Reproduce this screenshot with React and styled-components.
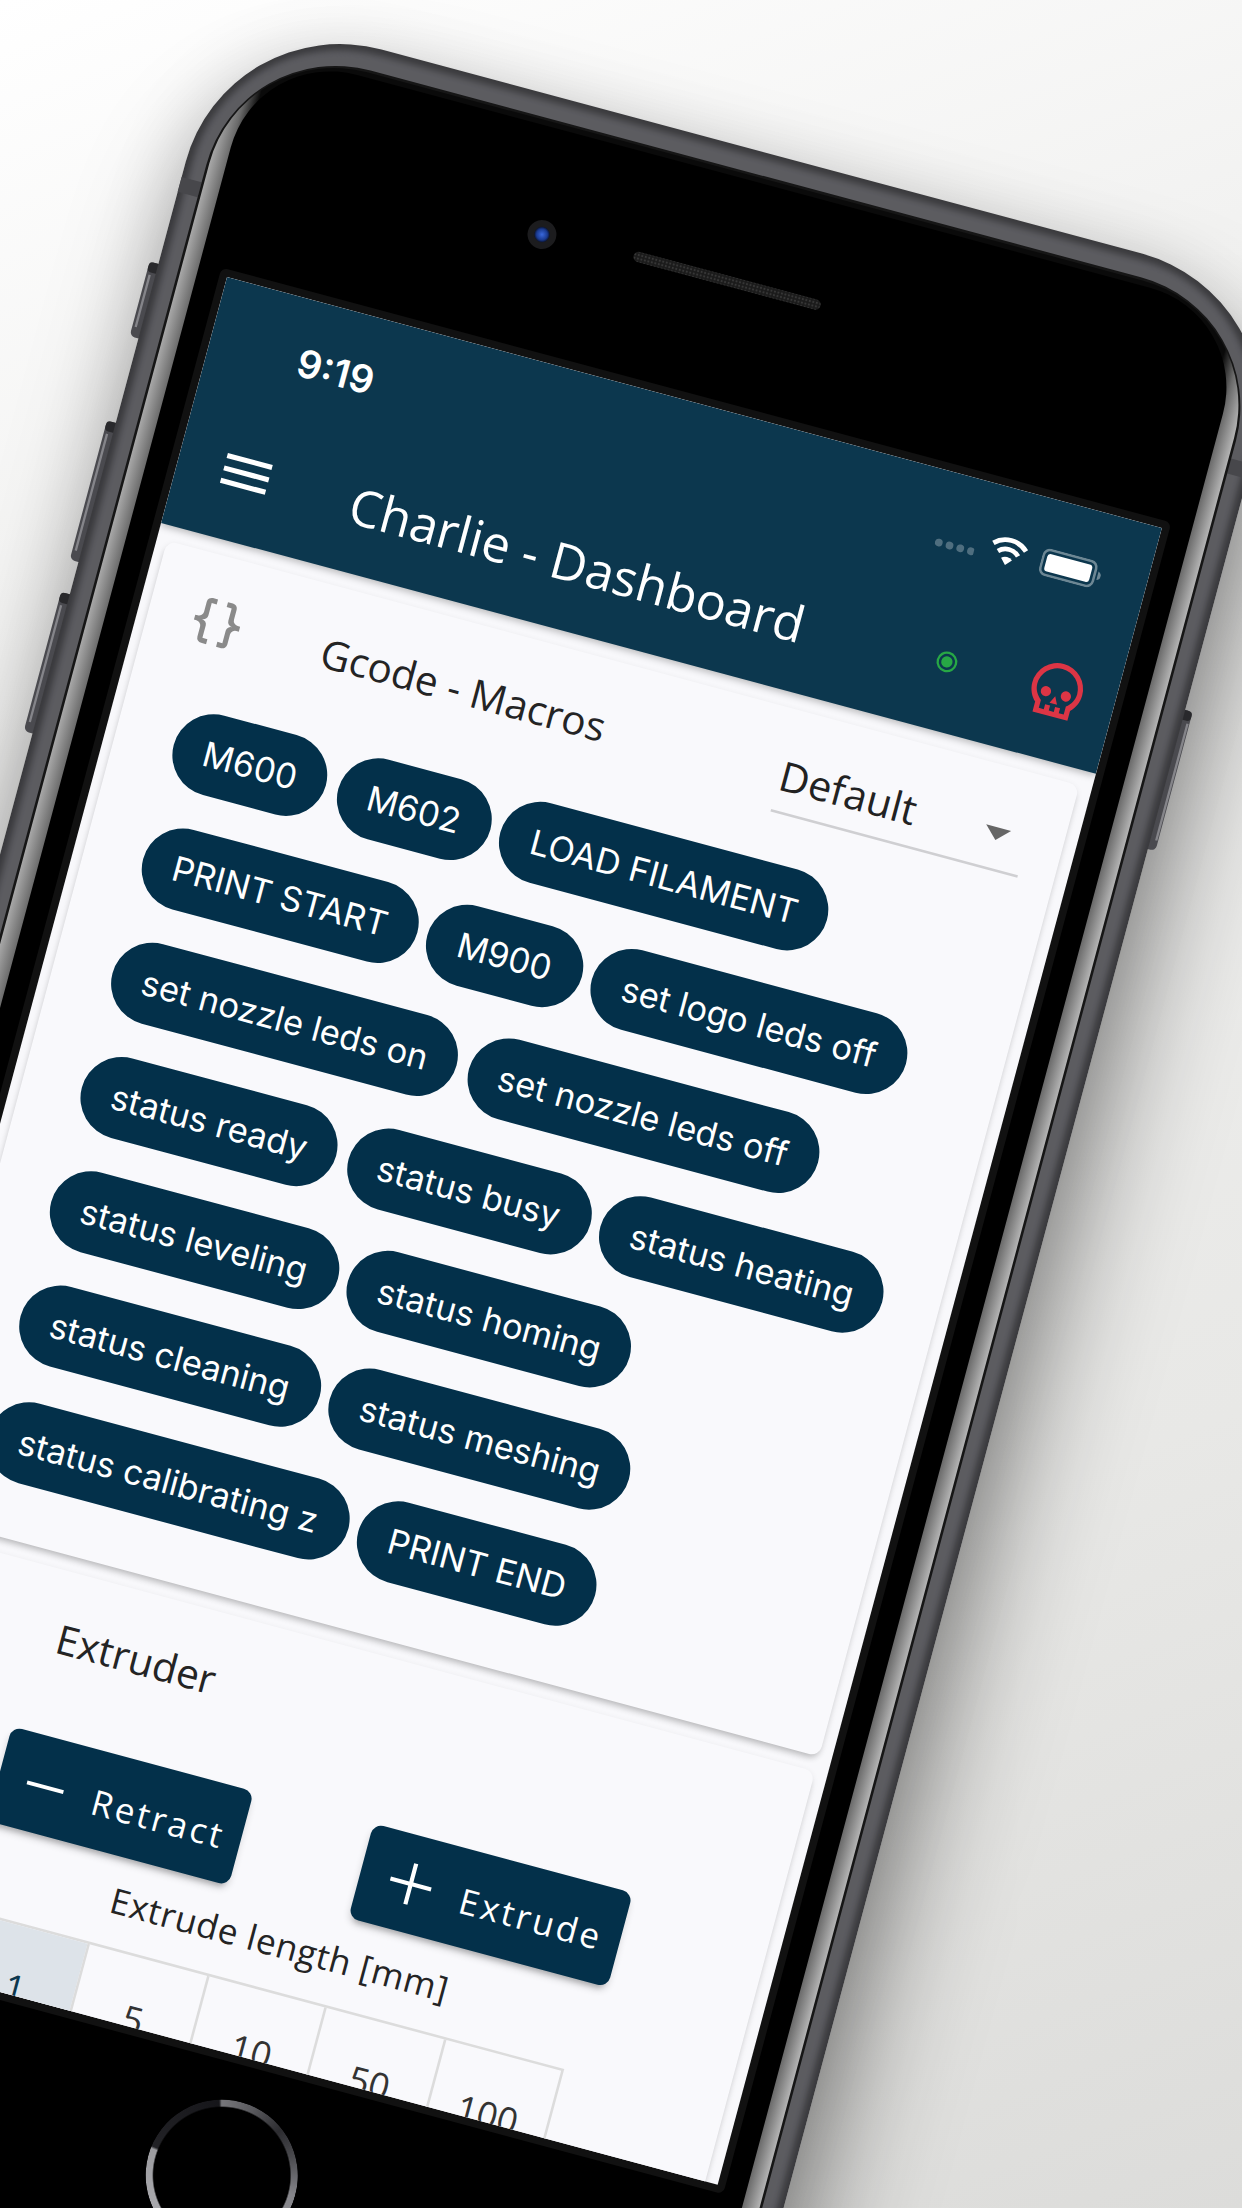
import React from 'react'
import styled, { createGlobalStyle } from 'styled-components'

const GlobalStyle = createGlobalStyle`
  html, body { margin: 0; padding: 0; background: #f1f1f0; }
  * { box-sizing: border-box; }
`

const Stage = styled.div`
  position: relative;
  width: 1242px;
  height: 2208px;
  overflow: hidden;
  background: linear-gradient(160deg, #ffffff 0%, #f2f2f1 25%, #e8e8e6 70%, #dcdcda 100%);
  font-family: "Open Sans", "Noto Sans", sans-serif;
`

/* the whole phone is one tilted sheet, drawn in 375x667 screen units */
const Device = styled.div`
  position: absolute;
  left: 0;
  top: 0;
  width: 375px;
  height: 667px;
  transform-origin: 0 0;
  transform: matrix(2.493, 0.669, -0.666, 2.484, 227, 277);
`

const DeviceShadow = styled.div`
  position: absolute;
  left: -27px;
  top: -100px;
  width: 429px;
  height: 867px;
  border-radius: 62px;
  box-shadow: 10px 24px 44px rgba(0, 0, 0, 0.42), -2px 4px 26px rgba(0, 0, 0, 0.14);
`

const Shell = styled.svg`
  position: absolute;
  left: 0;
  top: 0;
  width: 375px;
  height: 667px;
  overflow: visible;
`

const HomeRing = styled.div`
  position: absolute;
  left: 158.5px;
  top: 683.5px;
  width: 59px;
  height: 59px;
  border-radius: 50%;
  background: conic-gradient(from -15deg, #77777b 0deg, #5a5a5e 25deg, #2c2c30 52deg, #4a4a4e 75deg, #85858a 105deg,
    #a0a0a4 180deg, #a8a8ac 250deg, #9c9ca0 291deg, #222226 293deg, #16161a 358deg, #77777b 360deg);
  mask: radial-gradient(circle, transparent 26.4px, #000 27px);
`

const Screen = styled.div`
  position: absolute;
  left: 0;
  top: 0;
  width: 375px;
  height: 667px;
  overflow: hidden;
  display: flex;
  flex-direction: column;
  background: #f8f8fb;
  color: #222;
`

const AppBar = styled.header`
  flex: none;
  height: 99px;
  background: #0c374e;
  color: #fff;
  box-shadow: 0 1px 3px rgba(0, 0, 0, 0.25);
  position: relative;
  z-index: 1;
`

const StatusBar = styled.div`
  height: 48px;
  padding: 0 18px 0 35px;
  display: flex;
  align-items: center;
`

const Time = styled.span`
  font-family: Inter, "Liberation Sans", sans-serif;
  font-size: 15px;
  font-weight: 600;
  flex: 1;
`

const SignalDots = styled.svg`
  width: 16px;
  height: 4px;
  margin-top: 7px;
`

const Wifi = styled.svg`
  width: 16px;
  height: 12px;
  margin: 0 5px 0 5px;
`

const Battery = styled.svg`
  width: 24px;
  height: 11px;
`

const Toolbar = styled.div`
  height: 48px;
  padding: 0 11px 0 15px;
  display: flex;
  align-items: center;
`

const Icon = styled.svg`
  flex: none;
  width: ${p => p.$size || 24}px;
  height: ${p => p.$size || 24}px;
  fill: ${p => p.$color || 'currentColor'};
`

const Title = styled.h1`
  flex: 1;
  margin: 0 0 0 30px;
  font-size: 19.6px;
  font-weight: 400;
  white-space: nowrap;
`

const StatusLamp = styled.svg`
  width: 24px;
  height: 24px;
  margin-right: 20px;
`

const Card = styled.section`
  flex: none;
  margin: 6px 5px 0 4px;
  background: #f9f9fc;
  border-radius: 4px;
  box-shadow: 0 2px 3px -1px rgba(0, 0, 0, 0.2), 0 1px 3px rgba(0, 0, 0, 0.1);
  padding-bottom: ${p => p.$bottom || 0}px;
`

const CardHeader = styled.div`
  height: 42px;
  padding: 10px 14px 0 15px;
  display: flex;
  align-items: center;
  margin-bottom: ${p => p.$gap}px;
`

const CardTitle = styled.h2`
  flex: 1;
  margin: 0 0 0 30px;
  font-size: 15.7px;
  font-weight: 400;
  color: #242424;
`

const Select = styled.div`
  width: 99px;
  height: 30px;
  display: flex;
  align-items: center;
  justify-content: space-between;
  border-bottom: 1px solid #cfcfd2;
  font-size: 16px;
  color: #222;
`

const ChipList = styled.div`
  padding-left: 23px;
  display: flex;
  flex-direction: column;
  gap: 14.2px;
`

const ChipRow = styled.div`
  display: flex;
  gap: 4.5px;
`

const Chip = styled.span`
  height: 32px;
  padding: 0 12px;
  display: inline-flex;
  align-items: center;
  border-radius: 16px;
  background: #03304a;
  color: #fff;
  font-family: Inter, "Noto Sans", sans-serif;
  font-size: 13.4px;
  white-space: nowrap;
`

const ActionRow = styled.div`
  display: flex;
  justify-content: center;
  gap: 48px;
  padding-left: 5px;
`

const ActionButton = styled.button`
  height: 38px;
  padding: 0 6.5px 0 6px;
  display: inline-flex;
  align-items: center;
  gap: 6px;
  border: 0;
  border-radius: 4px;
  background: #03304a;
  color: #fff;
  font: inherit;
  font-size: 13.6px;
  letter-spacing: 1.1px;
  box-shadow: 0 3px 2px -2px rgba(0, 0, 0, 0.2), 0 2px 3px rgba(0, 0, 0, 0.14);
`

const FieldLabel = styled.div`
  margin-top: 7px;
  text-align: center;
  font-size: 13.6px;
  line-height: 20px;
  letter-spacing: 0.25px;
  color: #242424;
`

const LengthGroup = styled.div`
  margin: 8px auto 0;
  width: 238px;
  display: flex;
  border: 1px solid #dcdcdc;
`

const LengthCell = styled.div`
  flex: 1;
  height: 46px;
  display: flex;
  align-items: center;
  justify-content: center;
  font-size: 14px;
  border-left: ${p => (p.$first ? 0 : '1px solid #dcdcdc')};
  background: ${p => (p.$active ? '#dde3e9' : 'transparent')};
  color: ${p => (p.$active ? '#0c374e' : '#333')};
`

const chipRows = [
  ['M600', 'M602', 'LOAD FILAMENT'],
  ['PRINT START', 'M900', 'set logo leds off'],
  ['set nozzle leds on', 'set nozzle leds off'],
  ['status ready', 'status busy', 'status heating'],
  ['status leveling', 'status homing'],
  ['status cleaning', 'status meshing'],
  ['status calibrating z', 'PRINT END'],
]

const lengths = [1, 5, 10, 50, 100]

const mdi = {
  menu: 'M3,6H21V8H3V6M3,11H21V13H3V11M3,16H21V18H3V16Z',
  skull: 'M8,15A2,2 0 0,1 6,13A2,2 0 0,1 8,11A2,2 0 0,1 10,13A2,2 0 0,1 8,15M10.5,17L12,14L13.5,17H10.5M16,15A2,2 0 0,1 14,13A2,2 0 0,1 16,11A2,2 0 0,1 18,13A2,2 0 0,1 16,15M22,11A10,10 0 0,0 12,1A10,10 0 0,0 2,11C2,13.8 3.2,16.3 5,18V22H19V18C20.8,16.3 22,13.8 22,11M17,20H15V18H13V20H11V18H9V20H7V16.8C5.2,15.3 4,13.3 4,11A8,8 0 0,1 12,3A8,8 0 0,1 20,11C20,13.3 18.8,15.4 17,16.8V20Z',
  braces: 'M8,3A2,2 0 0,0 6,5V9A2,2 0 0,1 4,11H3V13H4A2,2 0 0,1 6,15V19A2,2 0 0,0 8,21H10V19H8V14A2,2 0 0,0 6,12A2,2 0 0,0 8,10V5H10V3M16,3A2,2 0 0,1 18,5V9A2,2 0 0,0 20,11H21V13H20A2,2 0 0,0 18,15V19A2,2 0 0,1 16,21H14V19H16V14A2,2 0 0,1 18,12A2,2 0 0,1 16,10V5H14V3H16Z',
  down: 'M7,10L12,15L17,10H7Z',
  minus: 'M19,12.7H5V11.3H19Z',
  plus: 'M19,12.7H12.7V19H11.3V12.7H5V11.3H11.3V5H12.7V11.3H19Z',
}

const MdiIcon = ({ d, size, color }) => (
  <Icon viewBox="0 0 24 24" $size={size} $color={color}><path d={d} /></Icon>
)

const SideKey = ({ x, y, h, light }) => (
  <g>
    <rect x={x} y={y} width="8" height={h} rx="2" fill="#4a4a4f" />
    <rect x={x} y={y} width="8" height="4" rx="1.5" fill="#29292c" />
    <rect x={light} y={y + 5} width="0.9" height={h - 9} fill="#85858a" />
  </g>
)

function PhoneShell() {
  return (
    <Shell viewBox="0 0 375 667">
      <defs>
        <linearGradient id="edge" gradientUnits="userSpaceOnUse" x1="-18" y1="0" x2="393" y2="0">
          <stop offset="0" stopColor="#a8a8a8" />
          <stop offset="0.016" stopColor="#6a6a6a" />
          <stop offset="0.03" stopColor="#0a0a0a" />
          <stop offset="0.97" stopColor="#0a0a0a" />
          <stop offset="0.984" stopColor="#6a6a6a" />
          <stop offset="1" stopColor="#b4b4b4" />
        </linearGradient>
        <radialGradient id="lens">
          <stop offset="0" stopColor="#3a68dc" />
          <stop offset="0.7" stopColor="#1a3a90" />
          <stop offset="1" stopColor="#0b1430" />
        </radialGradient>
        <pattern id="mesh" width="1.4" height="1.4" patternUnits="userSpaceOnUse">
          <rect width="1.4" height="1.4" fill="#1b1b1b" />
          <circle cx="0.7" cy="0.7" r="0.4" fill="#383838" />
        </pattern>
        <filter id="soft" x="-5%" y="-5%" width="110%" height="110%">
          <feGaussianBlur stdDeviation="1.3" />
        </filter>
      </defs>

      <SideKey x={-30.5} y={2} h={30} light={-29.6} />
      <SideKey x={-30.5} y={66} h={56} light={-29.6} />
      <SideKey x={-30.5} y={135} h={56} light={-29.6} />
      <SideKey x={397} y={66} h={56} light={403.8} />

      <rect x="-27" y="-101" width="429" height="868" rx="62" fill="#3a3a3d" />
      <rect x="-24.5" y="-98.5" width="424" height="863" rx="59" fill="#5c5c61" filter="url(#soft)" />
      <rect x="-27" y="-33" width="8" height="6" fill="#47474b" />
      <rect x="394" y="-33" width="8" height="6" fill="#47474b" />
      <rect x="-19" y="-92" width="413" height="852" rx="52" fill="#161616" />
      <rect x="-18" y="-91" width="411" height="850" rx="50" fill="url(#edge)" />
      <rect x="-11.6" y="-89" width="398" height="850" rx="40" fill="#000" />
      <rect x="-3" y="-3" width="381" height="673" rx="2.5" fill="#111" />

      <circle cx="113.6" cy="-47.7" r="5.6" fill="#1c1c1e" />
      <circle cx="113.6" cy="-47.7" r="3" fill="url(#lens)" />
      <rect x="150" y="-51" width="75" height="4" rx="2" fill="url(#mesh)" />
    </Shell>
  )
}

export default function App() {
  return (
    <Stage>
      <GlobalStyle />
      <Device>
        <DeviceShadow />
        <PhoneShell />
        <HomeRing />
        <Screen>
          <AppBar>
            <StatusBar>
              <Time>9:19</Time>
              <SignalDots viewBox="0 0 16 4">
                {[2, 6.3, 10.6, 14.9].map(cx => <circle key={cx} cx={cx} cy="2" r="1.5" fill="#fff" opacity="0.28" />)}
              </SignalDots>
              <Wifi viewBox="0 0 14 11">
                <path d="M1 4.2A8.6 8.6 0 0 1 13 4.2" fill="none" stroke="#fff" strokeWidth="1.7" />
                <path d="M3.3 6.6A5.2 5.2 0 0 1 10.7 6.6" fill="none" stroke="#fff" strokeWidth="1.7" />
                <path d="M5 8.6A2.9 2.9 0 0 1 9 8.6L7 10.8Z" fill="#fff" />
              </Wifi>
              <Battery viewBox="0 0 24 11">
                <rect x="0.5" y="0.5" width="21" height="10" rx="2.5" fill="none" stroke="#fff" strokeOpacity="0.4" />
                <rect x="2" y="2" width="18" height="7" rx="1.3" fill="#fff" />
                <path d="M22.7 3.8C23.6 4.2 24 4.8 24 5.5C24 6.2 23.6 6.8 22.7 7.2Z" fill="#fff" opacity="0.4" />
              </Battery>
            </StatusBar>
            <Toolbar>
              <MdiIcon d={mdi.menu} />
              <Title>Charlie - Dashboard</Title>
              <StatusLamp viewBox="0 0 24 24">
                <circle cx="12" cy="12" r="3.6" fill="none" stroke="#27a745" strokeWidth="0.9" />
                <circle cx="12" cy="12" r="2.2" fill="#27a745" />
              </StatusLamp>
              <MdiIcon d={mdi.skull} color="#dc3545" />
            </Toolbar>
          </AppBar>

          <Card $bottom={22.7}>
            <CardHeader $gap={17.5}>
              <MdiIcon d={mdi.braces} color="#8a8a8a" />
              <CardTitle>Gcode - Macros</CardTitle>
              <Select>
                Default
                <MdiIcon d={mdi.down} color="#666" />
              </Select>
            </CardHeader>
            <ChipList>
              {chipRows.map(row => (
                <ChipRow key={row[0]}>
                  {row.map(name => <Chip key={name}>{name}</Chip>)}
                </ChipRow>
              ))}
            </ChipList>
          </Card>

          <Card $bottom={8}>
            <CardHeader $gap={22}>
              <MdiIcon d={mdi.braces} color="transparent" />
              <CardTitle>Extruder</CardTitle>
            </CardHeader>
            <ActionRow>
              <ActionButton><MdiIcon d={mdi.minus} size={25} />Retract</ActionButton>
              <ActionButton><MdiIcon d={mdi.plus} size={28} />Extrude</ActionButton>
            </ActionRow>
            <FieldLabel>Extrude length [mm]</FieldLabel>
            <LengthGroup>
              {lengths.map((n, i) => (
                <LengthCell key={n} $first={i === 0} $active={n === 1}>{n}</LengthCell>
              ))}
            </LengthGroup>
          </Card>
        </Screen>
      </Device>
    </Stage>
  )
}
